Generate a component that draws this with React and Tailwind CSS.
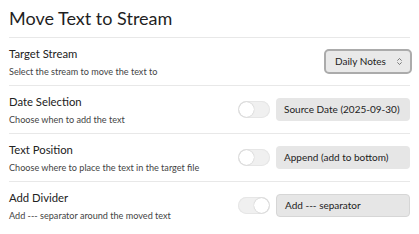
import { ChevronsUpDown } from "lucide-react";

const rows = [
  {
    label: "Date Selection",
    desc: "Choose when to add the text",
    value: "Source Date (2025-09-30)",
    on: false,
  },
  {
    label: "Text Position",
    desc: "Choose where to place the text in the target file",
    value: "Append (add to bottom)",
    on: false,
  },
  {
    label: "Add Divider",
    desc: "Add --- separator around the moved text",
    value: "Add --- separator",
    on: true,
    bordered: true,
  },
];

function RowText({ label, desc }) {
  return (
    <div className="flex flex-col">
      <span className="text-[11.3px] leading-[14px] text-[#222]">{label}</span>
      <span className="mt-[5px] text-[9.1px] leading-[11px] text-[#444]">{desc}</span>
    </div>
  );
}

function Toggle({ on }) {
  return (
    <div
      className={`flex h-[17px] w-[32px] items-center rounded-full bg-[#f0f0f0] px-[1px] shadow-[inset_0_0_0_1px_#e6e6e6] ${
        on ? "justify-end" : "justify-start"
      }`}
    >
      <div className="h-[15px] w-[15px] rounded-full bg-white shadow-[0_0_1px_rgba(0,0,0,0.35)]" />
    </div>
  );
}

export default function App() {
  return (
    <div
      className="h-[234px] w-[419px] bg-white pl-[9px] pr-[9px]"
      style={{ fontFamily: 'Lato, "Noto Sans", sans-serif' }}
    >
      {/* title */}
      <div className="flex h-[37px] items-center">
        <h1 className="text-[18px] font-normal text-[#1f1f1f]">Move Text to Stream</h1>
      </div>

      {/* target stream */}
      <div className="flex h-[48px] items-center justify-between border-t border-[#e8e8e8]">
        <RowText label="Target Stream" desc="Select the stream to move the text to" />
        <div className="-mr-[2px] flex h-[25px] w-[88px] items-center justify-between rounded-[5px] border-2 border-[#ababab] bg-[#e9e9e9] pl-[9px] pr-[6px]">
          <span className="whitespace-nowrap text-[10px] text-[#222]">Daily Notes</span>
          <ChevronsUpDown size={9} strokeWidth={2} className="text-[#555]" />
        </div>
      </div>

      {rows.map((r) => (
        <div
          key={r.label}
          className="flex h-[48px] items-center justify-between border-t border-[#e8e8e8]"
        >
          <RowText label={r.label} desc={r.desc} />
          <div className="flex items-center gap-[6px]">
            <Toggle on={r.on} />
            <div
              className={`flex h-[23px] w-[134px] items-center whitespace-nowrap rounded-[4px] bg-[#e6e6e6] pl-[8px] text-[10px] text-[#222] ${
                r.bordered ? "border border-[#d6d6d6]" : ""
              }`}
            >
              {r.value}
            </div>
          </div>
        </div>
      ))}
    </div>
  );
}
